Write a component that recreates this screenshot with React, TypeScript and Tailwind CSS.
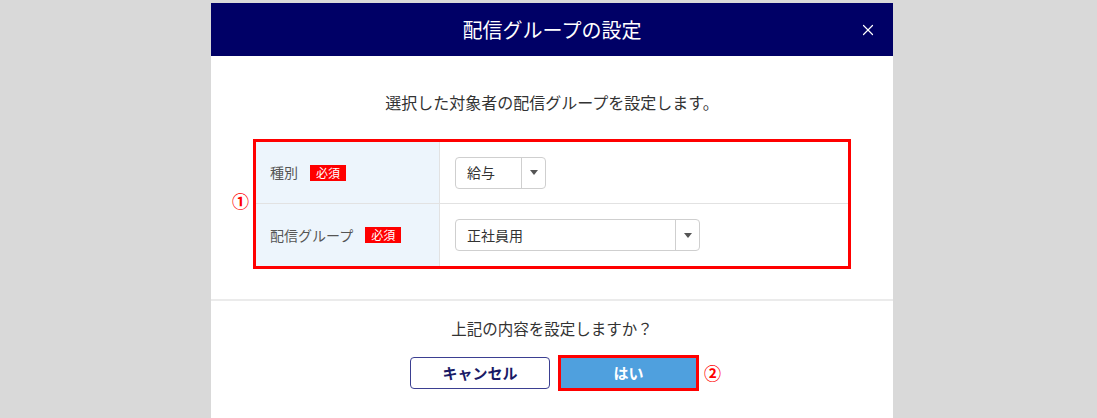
import { X } from "lucide-react";

const font = { fontFamily: '"Noto Sans CJK JP", "Noto Sans", sans-serif' };

function Required() {
  return (
    <span className="ml-[12px] inline-flex h-[16px] items-center bg-[#ff0000] px-[6px] text-[12px] leading-none text-white">
      必須
    </span>
  );
}

function SelectBox({ value, width }: { value: string; width: string }) {
  return (
    <div
      className={`flex h-[32px] items-stretch rounded-[4px] border border-[#cfcfcf] bg-white ${width}`}
    >
      <div className="flex flex-1 items-center pl-[11px] text-[14px] text-[#333]">{value}</div>
      <div className="flex w-[24px] items-center justify-center border-l border-[#cfcfcf]">
        <span className="h-0 w-0 border-x-[4px] border-t-[5px] border-x-transparent border-t-[#555]" />
      </div>
    </div>
  );
}

export default function App() {
  return (
    <div className="h-[418px] w-[1097px] overflow-hidden bg-[#d9d9d9] pt-[3px]" style={font}>
      <div className="ml-[211px] h-[415px] w-[682px] bg-white">
        <header className="relative flex h-[53px] items-center justify-center bg-[#000066]">
          <h1 className="text-[20px] font-normal text-white">配信グループの設定</h1>
          <X className="absolute right-[16px] top-[18px] h-[18px] w-[18px] text-white" strokeWidth={1.6} />
        </header>

        <div className="pt-[35px] text-center text-[16px] leading-[22px] text-[#333]">
          選択した対象者の配信グループを設定します。
        </div>

        <div className="relative mx-[42px] mt-[26px] border-[3px] border-[#ff0000]">
          <span className="absolute left-[-24px] top-[50px] text-[17px] font-bold leading-none text-[#ff0000]">
            ①
          </span>
          <div className="flex h-[62px] border-b border-[#e2e2e2]">
            <div className="flex w-[184px] items-center border-r border-[#e2e2e2] bg-[#edf5fc] pl-[14px] text-[14px] text-[#555]">
              種別
              <Required />
            </div>
            <div className="flex flex-1 items-center pl-[15px]">
              <SelectBox value="給与" width="w-[91px]" />
            </div>
          </div>
          <div className="flex h-[62px]">
            <div className="flex w-[184px] items-center border-r border-[#e2e2e2] bg-[#edf5fc] pl-[14px] text-[14px] text-[#555]">
              配信グループ
              <Required />
            </div>
            <div className="flex flex-1 items-center pl-[15px]">
              <SelectBox value="正社員用" width="w-[245px]" />
            </div>
          </div>
        </div>

        <div className="mt-[30px] border-t-2 border-[#ebebeb] pt-[16px] text-center text-[15.5px] leading-[22px] text-[#333]">
          上記の内容を設定しますか？
        </div>

        <div className="mt-[16px] flex items-center justify-center gap-[8px] pl-[5px]">
          <button
            type="button"
            className="h-[32px] w-[140px] rounded-[4px] border border-[#3b3f91] bg-white text-[15px] font-bold text-[#1a1a66]"
          >
            キャンセル
          </button>
          <div className="relative">
            <div className="border-[3px] border-[#ff0000]">
              <button
                type="button"
                className="block h-[30px] w-[135px] bg-[#4fa0de] text-[15px] font-bold text-white"
              >
                はい
              </button>
            </div>
            <span className="absolute left-[146px] top-[9px] text-[17px] font-bold leading-none text-[#ff0000]">
              ②
            </span>
          </div>
        </div>
      </div>
    </div>
  );
}
